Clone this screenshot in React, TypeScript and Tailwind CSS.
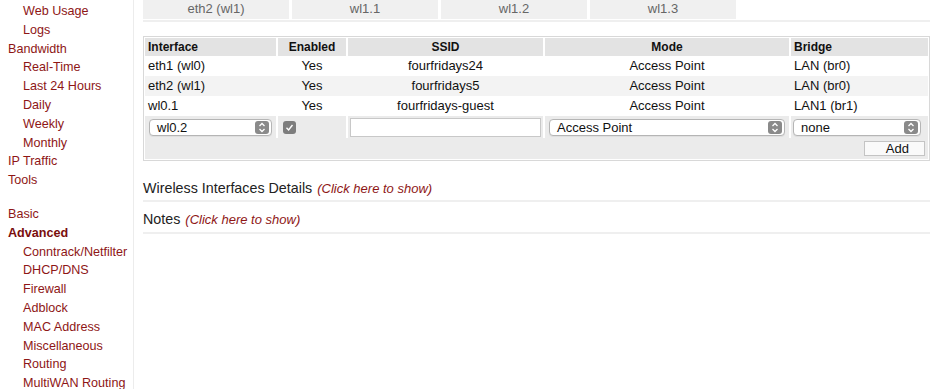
import React from "react";

const red = "text-[#8e1616]";

function Stepper() {
  return (
    <span className="absolute right-[2px] top-[1px] bottom-[1px] w-[14px] rounded-[3px] bg-[#8a8a8a] flex items-center justify-center">
      <svg width="8" height="11" viewBox="0 0 8 11" fill="none" stroke="white" strokeWidth="1.3">
        <path d="M1.5 4 L4 1.5 L6.5 4" />
        <path d="M1.5 7 L4 9.5 L6.5 7" />
      </svg>
    </span>
  );
}

function Select({ value, className }: { value: string; className?: string }) {
  return (
    <div
      className={`relative h-[17px] rounded-[4px] border border-[#b5b5b5] bg-white pl-[7px] text-[13px] leading-[15px] text-[#111] shadow-[0_1px_0_rgba(0,0,0,0.05)] ${className ?? ""}`}
    >
      {value}
      <Stepper />
    </div>
  );
}

export default function App() {
  const side: [string, number][] = [
    ["Web Usage", 1],
    ["Logs", 1],
    ["Bandwidth", 0],
    ["Real-Time", 1],
    ["Last 24 Hours", 1],
    ["Daily", 1],
    ["Weekly", 1],
    ["Monthly", 1],
    ["IP Traffic", 0],
    ["Tools", 0],
  ];
  const side2: [string, number][] = [
    ["Basic", 0],
    ["Advanced", 2],
    ["Conntrack/Netfilter", 1],
    ["DHCP/DNS", 1],
    ["Firewall", 1],
    ["Adblock", 1],
    ["MAC Address", 1],
    ["Miscellaneous", 1],
    ["Routing", 1],
    ["MultiWAN Routing", 1],
  ];
  const item = ([t, k]: [string, number]) => (
    <div
      key={t}
      className={`h-[18.8px] leading-[18.8px] ${k === 1 ? "pl-[23px]" : "pl-[8px]"} ${k === 2 ? "font-bold text-[#7a0d0d]" : red}`}
    >
      {t}
    </div>
  );
  const rows = [
    ["eth1 (wl0)", "Yes", "fourfridays24", "Access Point", "LAN (br0)"],
    ["eth2 (wl1)", "Yes", "fourfridays5", "Access Point", "LAN (br0)"],
    ["wl0.1", "Yes", "fourfridays-guest", "Access Point", "LAN1 (br1)"],
  ];
  const cols = "grid grid-cols-[131px_68px_195px_244px_1fr] gap-x-[2px]";
  return (
    <div className="flex h-[389px] w-[933px] overflow-hidden bg-white font-['Liberation_Sans',Arial,sans-serif] text-[13px]">
      <div className="w-[134px] shrink-0 border-r border-[#ececec] pt-[2px] text-[12.6px]">
        {side.map(item)}
        <div className="h-[15px]" />
        {side2.map(item)}
      </div>
      <div className="flex-1 pl-[9px] pr-[3px]">
        <div className="flex gap-[3px] border-b-2 border-[#efefef] pb-px">
          {["eth2 (wl1)", "wl1.1", "wl1.2", "wl1.3"].map((t) => (
            <div
              key={t}
              className="flex h-[19px] w-[146px] items-center justify-center bg-[#f0f0f0] pb-[1px] text-[13px] text-[#666]"
            >
              {t}
            </div>
          ))}
        </div>
        <div className="mt-[14px] border border-[#d8d8d8] p-px">
          <div className={`${cols} h-[18px] bg-white text-[12px] font-bold text-[#111]`}>
            <div className="bg-[#e3e3e3] pl-[3px] leading-[18px]">Interface</div>
            <div className="bg-[#e3e3e3] text-center leading-[18px]">Enabled</div>
            <div className="bg-[#e3e3e3] text-center leading-[18px]">SSID</div>
            <div className="bg-[#e3e3e3] text-center leading-[18px]">Mode</div>
            <div className="bg-[#e3e3e3] pl-[3px] leading-[18px]">Bridge</div>
          </div>
          {rows.map((r, i) => (
            <div
              key={i}
              className={`${cols} h-[20px] leading-[19px] text-[#111] ${i === 1 ? "bg-[#f3f3f3]" : "bg-white"}`}
            >
              <div className="pl-[3px]">{r[0]}</div>
              <div className="text-center">{r[1]}</div>
              <div className="text-center">{r[2]}</div>
              <div className="text-center">{r[3]}</div>
              <div className="pl-[3px]">{r[4]}</div>
            </div>
          ))}
          <div className={`${cols} h-[22px] bg-white`}>
            <div className="flex items-center bg-[#ebebeb] px-[4px]">
              <Select value="wl0.2" className="w-[123px]" />
            </div>
            <div className="flex items-center bg-[#ebebeb] pl-[5px]">
              <span className="flex h-[13px] w-[13px] items-center justify-center rounded-[3px] bg-[#7d7d7d]">
                <svg width="9" height="9" viewBox="0 0 9 9" fill="none" stroke="white" strokeWidth="1.4">
                  <path d="M1.5 4.8 L3.6 6.9 L7.5 2" />
                </svg>
              </span>
            </div>
            <div className="flex items-center bg-[#ebebeb] px-[2px]">
              <div className="h-[19px] w-full border border-[#c8c8c8] bg-white" />
            </div>
            <div className="flex items-center bg-[#ebebeb] px-[4px]">
              <Select value="Access Point" className="w-full" />
            </div>
            <div className="flex items-center bg-[#ebebeb] px-[2px] pr-[7px]">
              <Select value="none" className="w-full" />
            </div>
          </div>
          <div className="flex h-[21px] items-center justify-end bg-[#ebebeb] pr-[3px]">
            <div className="flex h-[15px] w-[61px] items-center justify-end border border-[#c4c4c4] bg-[#fafafa] pr-[15px] text-[13px] text-[#111]">
              Add
            </div>
          </div>
        </div>
        <div className="mt-[17px] flex h-[24px] items-center border-b-2 border-[#efefef] text-[14.3px] text-[#222]">
          Wireless Interfaces Details
          <span className={`ml-[5px] text-[13px] italic ${red}`}>(Click here to show)</span>
        </div>
        <div className="flex h-[32px] items-center border-b-2 border-[#efefef] pt-[6px] text-[14.3px] text-[#222]">
          Notes
          <span className={`ml-[5px] text-[13px] italic ${red}`}>(Click here to show)</span>
        </div>
      </div>
    </div>
  );
}
